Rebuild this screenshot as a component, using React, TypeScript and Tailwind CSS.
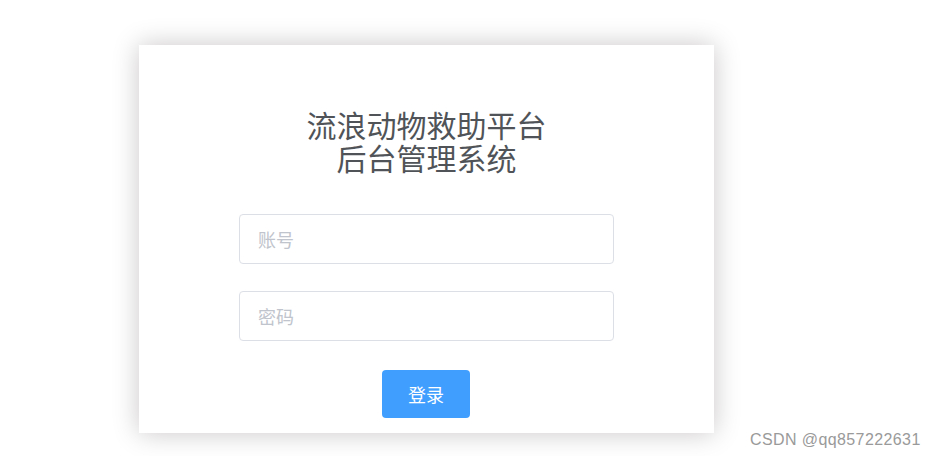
export default function App() {
  return (
    <div className="relative w-[936px] h-[456px] bg-white overflow-hidden font-['Noto_Sans_CJK_SC',sans-serif]">
      <div className="pt-[45px] pl-[139px]">
        <div className="w-[575px] h-[388px] bg-white shadow-[0_0_25px_#cac6c6] flex flex-col items-center pt-[63px]">
          <h1 className="text-[30px] leading-[33px] text-[#505458] text-center font-normal">
            流浪动物救助平台
            <br />
            后台管理系统
          </h1>
          <div className="mt-[40px] flex flex-col gap-[27px]">
            <input
              className="w-[375px] h-[50px] border border-[#dcdfe6] rounded-[4px] pl-[18px] text-[18px] text-[#606266] placeholder:text-[#c0c4cc] outline-none"
              placeholder="账号"
            />
            <input
              type="password"
              className="w-[375px] h-[50px] border border-[#dcdfe6] rounded-[4px] pl-[18px] text-[18px] text-[#606266] placeholder:text-[#c0c4cc] outline-none"
              placeholder="密码"
            />
          </div>
          <button className="mt-[29px] mr-px w-[88px] h-[48px] bg-[#409eff] rounded-[4px] text-white text-[18px]">
            登录
          </button>
        </div>
      </div>
      <div className="absolute left-[750px] top-[428px] text-[16px] tracking-[0.4px] text-[#9a9a9a] font-['Liberation_Sans',sans-serif]">
        CSDN @qq857222631
      </div>
    </div>
  );
}
